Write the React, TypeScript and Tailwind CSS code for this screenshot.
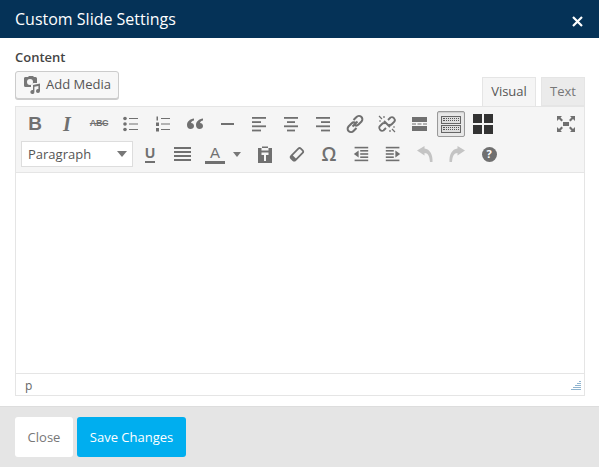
import type { ReactNode } from 'react'

const font = 'font-["Open_Sans",sans-serif]'

function Tool({ children, className = 'w-8' }: { children: ReactNode; className?: string }) {
  return <div className={`flex h-[26px] shrink-0 items-center justify-center text-[#707070] ${className}`}>{children}</div>
}

function Icon({ children, size = 20 }: { children: ReactNode; size?: number }) {
  return (
    <svg width={size} height={size} viewBox="0 0 20 20" fill="currentColor">
      {children}
    </svg>
  )
}

function Lines({ rows }: { rows: [number, number][] }) {
  return (
    <Icon>
      {rows.map(([x, w], i) => (
        <rect key={i} x={x} y={3 + i * 4.2} width={w} height="1.8" />
      ))}
    </Icon>
  )
}

function Dashes() {
  return (
    <svg width="15" height="14" viewBox="0 0 15 14" fill="currentColor">
      <rect x="0" y="0" width="15" height="5" />
      <rect x="0" y="6.500" width="4" height="1" />
      <rect x="5.500" y="6.500" width="4" height="1" />
      <rect x="11" y="6.500" width="4" height="1" />
      <rect x="0" y="9" width="15" height="5" />
    </svg>
  )
}

function Caret({ className }: { className: string }) {
  return <span className={`inline-block h-0 w-0 border-x-[4px] border-t-[5px] border-x-transparent ${className}`} />
}

function KeyRow() {
  return (
    <div className="flex h-[8px] w-[20px] flex-col justify-center gap-[1px] border border-[#666] bg-[#ddd] px-[1px]">
      <div className="h-[1px] border-t border-dotted border-[#555]" />
      <div className="h-[1px] border-t border-dotted border-[#555]" />
    </div>
  )
}

export default function App() {
  return (
    <div className={`flex h-[467px] w-[599px] flex-col overflow-hidden bg-white ${font}`}>
      <header className="flex h-[38px] shrink-0 items-center justify-between bg-[#053257] pr-[16px] pl-[15px]">
        <h1 className="text-[16px] leading-[38px] font-normal text-white">Custom Slide Settings</h1>
        <svg width="11" height="11" viewBox="0 0 11 11" className="mt-[4px] text-white" stroke="currentColor" strokeWidth="2.2">
          <path d="M1 1l9 9M10 1l-9 9" />
        </svg>
      </header>

      <main className="flex flex-1 flex-col pt-[11px] pr-[14px] pl-[15px]">
        <label className="text-[13px] leading-[16px] font-semibold text-[#444]">Content</label>
        <div className="mt-[6px] flex h-[35px] items-start justify-between">
          <button className="flex h-[28px] w-[104px] items-center gap-[5px] rounded-[3px] border border-[#ccc] bg-[#f7f7f7] pl-[7px] text-[13px] text-[#555] shadow-[0_1px_0_#ccc]">
            <svg width="18" height="18" viewBox="0 0 18 18" fill="#777">
              <path d="M3 1h2l1-1h4l1 1h1.500A1.500 1.500 0 0 1 14 2.500V7h-3.500L8 9v2H2.500A1.500 1.500 0 0 1 1 9.500v-7A1.500 1.500 0 0 1 3 1zm4 2a3 3 0 1 0 0 6 3 3 0 0 0 0-6z" />
              <path d="M10 9l7-1.500V15a2 2 0 1 1-1.600-2V10l-4 .800V16a2 2 0 1 1-1.400-1.900z" />
            </svg>
            Add Media
          </button>
          <div className="mt-[6px] flex gap-[5px] text-[13px]">
            <div className="flex h-[30px] w-[54px] items-center justify-center border border-b-0 border-[#e5e5e5] bg-[#f5f5f5] pb-[2px] text-[#555]">Visual</div>
            <div className="flex h-[29px] w-[44px] items-center justify-center border border-[#e5e5e5] bg-[#ebebeb] text-[#777]">Text</div>
          </div>
        </div>

        <div className="flex h-[290px] flex-col border border-[#e5e5e5]">
          <div className="flex h-[66px] shrink-0 flex-col border-b border-[#e5e5e5] bg-[#f5f5f5]">
            <div className="flex h-[34px] items-center pr-[2px] pl-[3px]">
              <Tool><span className="font-['Liberation_Sans',sans-serif] text-[19px] font-bold">B</span></Tool>
              <Tool><span className="font-['Liberation_Serif',serif] text-[20px] font-bold italic">I</span></Tool>
              <Tool><span className="font-['Liberation_Sans',sans-serif] text-[9px] font-bold tracking-[-0.3px] line-through">ABC</span></Tool>
              <Tool>
                <Icon>
                  <circle cx="4" cy="4.500" r="1.800" /><circle cx="4" cy="10" r="1.800" /><circle cx="4" cy="15.500" r="1.800" />
                  <rect x="8" y="4" width="9" height="1" /><rect x="8" y="9.500" width="9" height="1" /><rect x="8" y="15" width="9" height="1" />
                </Icon>
              </Tool>
              <Tool>
                <Icon>
                  <rect x="3.500" y="2.500" width="1.500" height="4" /><rect x="3" y="8.500" width="3" height="3.500" /><rect x="3" y="14" width="3" height="3.500" />
                  <rect x="8" y="4" width="9" height="1" /><rect x="8" y="9.500" width="9" height="1" /><rect x="8" y="15" width="9" height="1" />
                </Icon>
              </Tool>
              <Tool>
                <Icon>
                  <path d="M9 4.500C5 5 2 7.500 2 11c0 2.500 1.500 4 3.500 4S9 13.700 9 12s-1.300-3-3-3c.4-1.300 1.500-2.200 3-2.500zM18 4.500C14 5 11 7.500 11 11c0 2.500 1.500 4 3.500 4s3.500-1.300 3.500-3-1.300-3-3-3c.4-1.300 1.500-2.200 3-2.500z" />
                </Icon>
              </Tool>
              <Tool><div className="h-[2px] w-[13px] bg-current" /></Tool>
              <Tool><Lines rows={[[3, 14], [3, 9], [3, 14], [3, 9]]} /></Tool>
              <Tool><Lines rows={[[3, 14], [6, 8], [3, 14], [6, 8]]} /></Tool>
              <Tool><Lines rows={[[3, 14], [8, 9], [3, 14], [8, 9]]} /></Tool>
              <Tool>
                <svg width="20" height="20" viewBox="0 0 20 20" fill="none" stroke="currentColor" strokeWidth="2">
                  <path d="M8.500 6l3-3a3.200 3.200 0 0 1 5 4.500l-3 3a3.200 3.200 0 0 1-4.500 0M11.500 14l-3 3a3.200 3.200 0 0 1-5-4.500l3-3a3.200 3.200 0 0 1 4.500 0M7.500 12.500l5-5" />
                </svg>
              </Tool>
              <Tool>
                <svg width="20" height="20" viewBox="0 0 20 20" fill="none" stroke="currentColor" strokeWidth="2">
                  <path d="M11 6l2.500-2.500a3 3 0 0 1 4 4L15 10a3 3 0 0 1-3.500.5M9 14l-2.500 2.500a3 3 0 0 1-4-4L5 10a3 3 0 0 1 3.500-.5M7 7l6 6" strokeWidth="1.900" />
                  <path d="M2 2l3 3M18 18l-3-3M2 7h2M7 2v2M18 13h-2M13 18v-2" strokeWidth="1.200" />
                </svg>
              </Tool>
              <Tool><Dashes /></Tool>
              <div className="ml-[2px] flex h-[26px] w-[28px] shrink-0 flex-col items-center justify-center gap-[1px] rounded-[2px] border border-[#999] bg-[#e8e8e8] shadow-[inset_0_1px_1px_#ccc]">
                <KeyRow />
                <KeyRow />
              </div>
              <div className="ml-[8px] grid h-[20px] w-[20px] shrink-0 grid-cols-2 gap-[2px]">
                <div className="bg-[#333]" /><div className="bg-[#333]" /><div className="bg-[#333]" /><div className="bg-[#333]" />
              </div>
              <Tool className="ml-auto w-8">
                <svg width="18" height="16" viewBox="0 0 18 16" fill="currentColor">
                  <path d="M0 0h5L3.500 1.500 6 4 4.500 5.500 2 3 0 5zM18 0h-5l1.500 1.500L12 4l1.500 1.500L16 3l2 2zM0 16h5l-1.500-1.500L6 12l-1.500-1.500L2 13l-2-2zM18 16h-5l1.500-1.500L12 12l1.500-1.500L16 13l2-2z" />
                  <rect x="6" y="6" width="6" height="4" />
                </svg>
              </Tool>
            </div>
            <div className="flex h-[26px] items-center pl-[5px]">
              <div className="flex h-[26px] w-[112px] shrink-0 items-center justify-between border border-[#ddd] bg-white pr-[5px] pl-[6px] text-[13px] text-[#555]">
                <span className="pt-[2px]">Paragraph</span>
                <Caret className="border-t-[#777] !border-x-[5px] !border-t-[6px]" />
              </div>
              <Tool className="ml-[1px] w-8">
                <span className="border-b-2 border-current font-['Liberation_Sans',sans-serif] text-[14px] leading-[15px] font-bold">U</span>
              </Tool>
              <Tool>
                <svg width="17" height="14" viewBox="0 0 17 14" fill="currentColor">
                  <rect y="0" width="17" height="2" /><rect y="4" width="17" height="2" /><rect y="8" width="17" height="2" /><rect y="12" width="17" height="2" />
                </svg>
              </Tool>
              <Tool className="w-[51px] justify-start pl-[7px]">
                <span className="w-[20px] border-b-[3px] border-[#707070] text-center font-['Liberation_Sans',sans-serif] text-[15px] leading-[16px]">A</span>
                <Caret className="ml-[8px] border-t-[#777]" />
              </Tool>
              <Tool>
                <svg width="18" height="18" viewBox="0 0 18 18" fill="currentColor">
                  <path d="M2 3h4V1.500h6V3h4v15H2z" />
                  <rect x="5.500" y="3" width="7" height="2.500" fill="#f5f5f5" />
                  <path d="M5.500 7.500h7V10h-2.500v6H8v-6H5.500z" fill="#f5f5f5" />
                </svg>
              </Tool>
              <Tool>
                <svg width="16" height="16" viewBox="0 0 18 18" fill="none" stroke="currentColor" strokeWidth="2">
                  <path d="M2.500 11l8-8a2 2 0 0 1 2.800 0l2 2a2 2 0 0 1 0 2.800l-8 8a2 2 0 0 1-2.800 0l-2-2a2 2 0 0 1 0-2.800z" />
                  <path d="M2.500 11l5 5" strokeWidth="3" />
                </svg>
              </Tool>
              <Tool><span className="text-[19px] font-semibold">Ω</span></Tool>
              <Tool>
                <Icon size={16}>
                  <rect x="2" y="1" width="17" height="2" /><rect x="9" y="5" width="10" height="2" /><rect x="9" y="9" width="10" height="2" /><rect x="9" y="13" width="10" height="2" /><rect x="2" y="17" width="17" height="2" />
                  <path d="M1 10L7 5.500v9z" />
                </Icon>
              </Tool>
              <Tool>
                <Icon size={16}>
                  <rect x="1" y="1" width="17" height="2" /><rect x="1" y="5" width="10" height="2" /><rect x="1" y="9" width="10" height="2" /><rect x="1" y="13" width="10" height="2" /><rect x="1" y="17" width="17" height="2" />
                  <path d="M19 10l-6-4.500v9z" />
                </Icon>
              </Tool>
              <Tool className="w-8 text-[#c4c4c4]">
                <svg width="16" height="16" viewBox="0 0 16 16" fill="currentColor">
                  <path d="M7.500 0L0 4.500l7.500 5V7c3.500 0 5 3 5.500 9h2.500c.5-7-2.500-13-8-13.500z" />
                </svg>
              </Tool>
              <Tool className="w-8 text-[#c4c4c4]">
                <svg width="16" height="16" viewBox="0 0 16 16" fill="currentColor">
                  <path d="M8.500 0L16 4.500l-7.500 5V7C5 7 3.500 10 3 16H.5C0 9 3 3 8.500 2.500z" />
                </svg>
              </Tool>
              <Tool>
                <div className="flex h-[15px] w-[15px] items-center justify-center rounded-full bg-[#707070] text-[11px] font-bold text-white">?</div>
              </Tool>
            </div>
          </div>
          <div className="flex-1 bg-white" />
          <div className="flex h-[22px] shrink-0 items-center justify-between border-t border-[#e5e5e5] pr-[3px] pl-[9px] text-[12px] text-[#666]">
            <span className="pt-[2px]">p</span>
            <svg width="10" height="9" viewBox="0 0 10 9" fill="#8fb4cf" className="mt-[2px]">
              <rect x="8" y="0" width="2" height="1" /><rect x="6" y="2" width="4" height="1" /><rect x="4" y="4" width="6" height="1" /><rect x="2" y="6" width="8" height="1" /><rect x="0" y="8" width="10" height="1" />
            </svg>
          </div>
        </div>
      </main>

      <footer className="flex h-[61px] shrink-0 items-start gap-[4px] border-t border-[#ddd] bg-[#e5e5e5] pt-[10px] pl-[15px] text-[13px]">
        <button className="h-[40px] w-[58px] rounded-[3px] bg-white pt-[2px] text-[#777]">Close</button>
        <button className="h-[40px] w-[109px] rounded-[3px] bg-[#00aeef] pt-[2px] font-medium text-white">Save Changes</button>
      </footer>
    </div>
  )
}
